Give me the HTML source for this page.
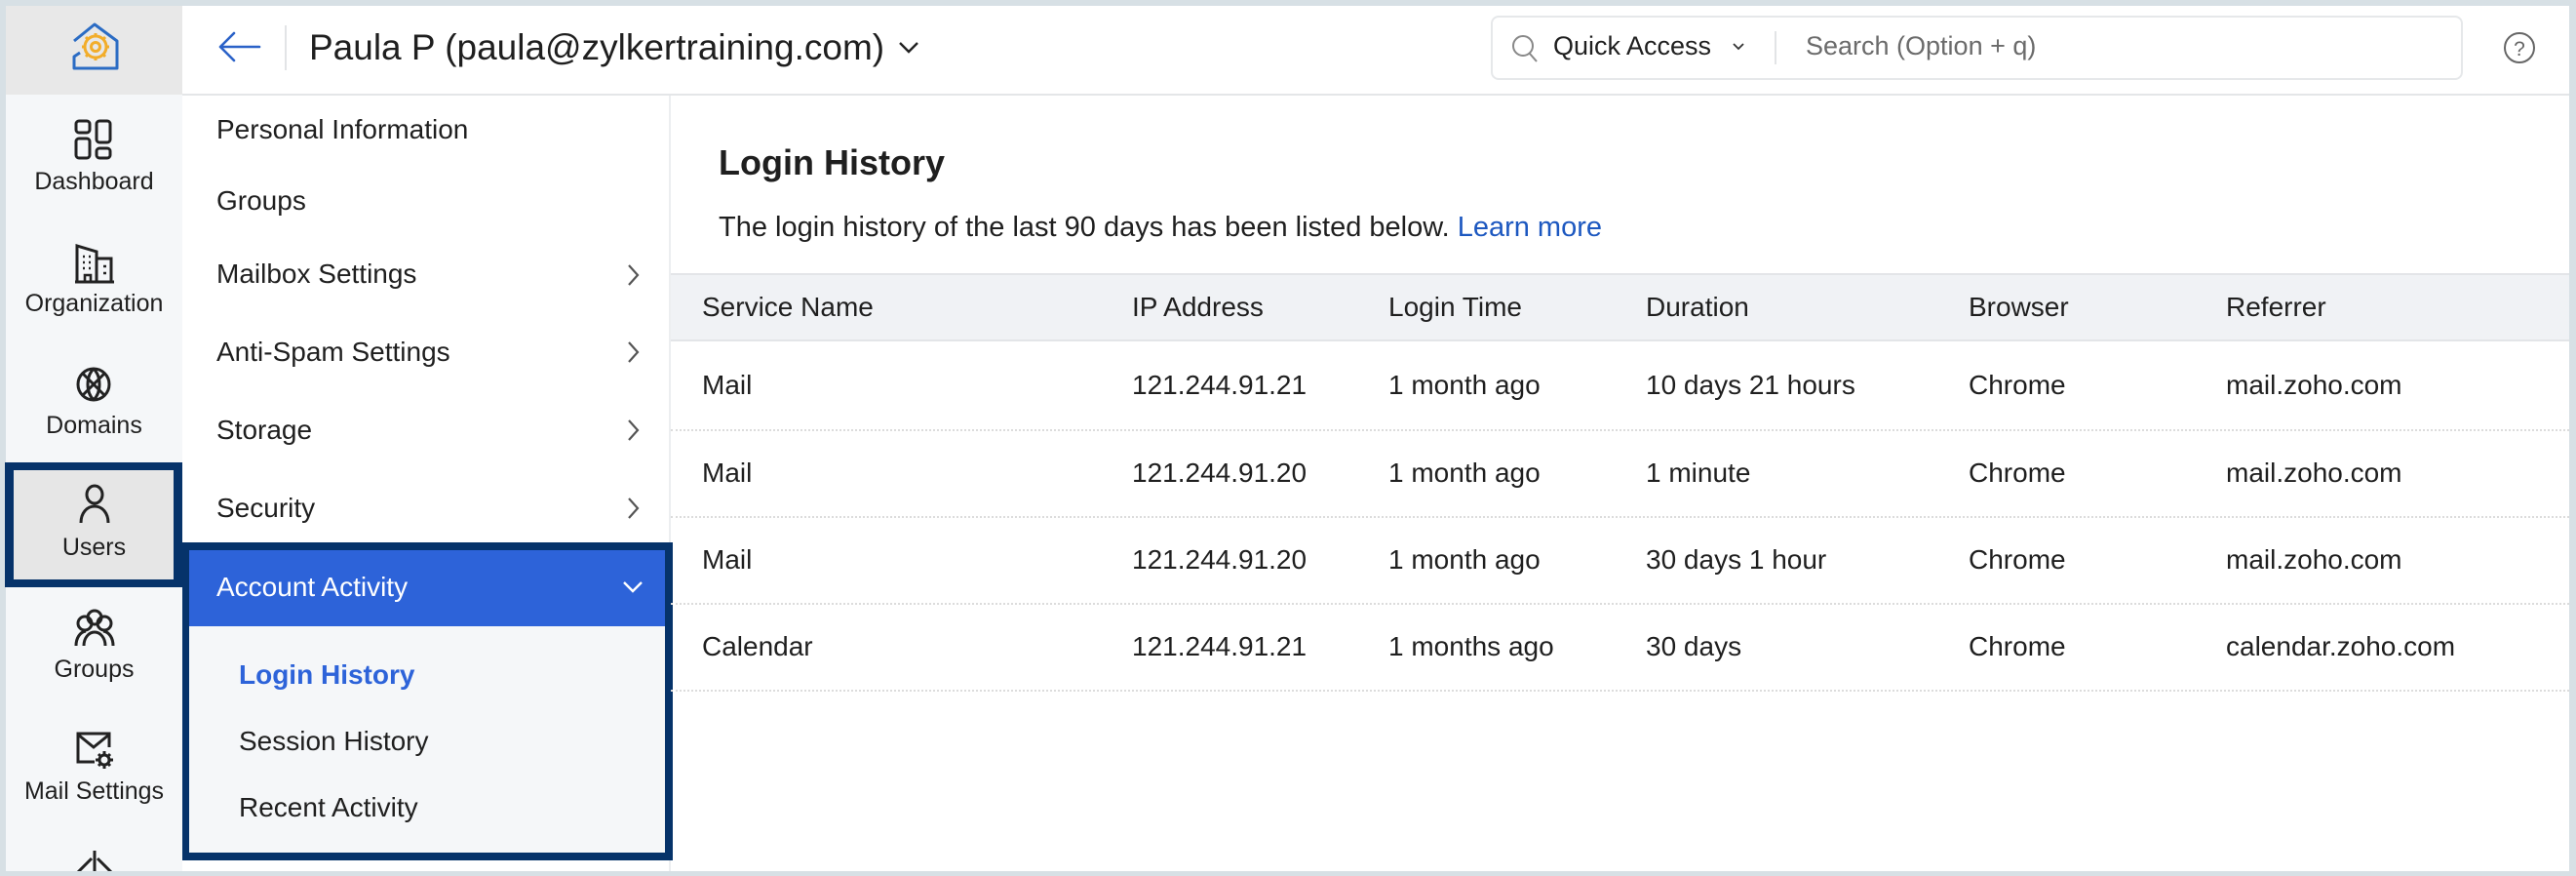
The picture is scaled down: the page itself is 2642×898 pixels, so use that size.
<!DOCTYPE html>
<html><head><meta charset="utf-8"><style>
*{margin:0;padding:0;box-sizing:border-box}
body{width:2642px;height:898px;background:#d7e0e5;font-family:"Liberation Sans",Arial,sans-serif;color:#1f1f1f;position:relative;overflow:hidden}
.a{position:absolute;white-space:nowrap}
.t{line-height:40px;height:40px}
</style></head><body>
<div class="a" style="left:6px;top:6px;width:2629px;height:887px;background:#fff"></div>
<div class="a" style="left:6px;top:6px;width:181px;height:91px;background:#e8e8e8"></div>
<svg class="a" style="left:70px;top:22px" width="56" height="52" viewBox="0 0 56 52">
<path d="M6 20 L27 3 L50 20 V48 H6 V36 L12 32" fill="none" stroke="#2b6cc4" stroke-width="3" stroke-linejoin="round"/>
<g fill="none" stroke="#f2ad2a" stroke-width="3">
<circle cx="28" cy="26" r="11"/><circle cx="28" cy="26" r="4.5"/>
<path d="M28 12v3M28 37v3M14 26h3M39 26h3M18 16l2 2M36 34l2 2M38 16l-2 2M18 36l2-2"/>
</g></svg>
<div class="a" style="left:6px;top:97px;width:181px;height:796px;background:#f5f7f9"></div>
<div class="a" style="left:187px;top:96px;width:2448px;height:2px;background:#e4e6e8"></div>
<svg class="a" style="left:222px;top:30px" width="48" height="36" viewBox="0 0 48 36"><path d="M44 18H4M18 4L4 18L18 32" fill="none" stroke="#2b62c8" stroke-width="2.6" stroke-linecap="round" stroke-linejoin="round"/></svg>
<div class="a" style="left:292px;top:26px;width:2px;height:46px;background:#e2e4e6"></div>
<div class="a" style="left:317px;top:28px;font-size:37px;line-height:42px">Paula P (paula@zylkertraining.com)</div>
<svg class="a" style="left:920px;top:41px" width="24" height="16" viewBox="0 0 24 16"><path d="M3 3l9 9 9-9" fill="none" stroke="#222" stroke-width="2.4"/></svg>
<div class="a" style="left:1529px;top:16px;width:997px;height:66px;border:2px solid #e6e8ea;border-radius:8px"></div>
<svg class="a" style="left:1549px;top:34px" width="30" height="32" viewBox="0 0 30 32"><circle cx="13" cy="13" r="10" fill="none" stroke="#888" stroke-width="2"/><path d="M20 21l7 8" stroke="#888" stroke-width="2"/></svg>
<div class="a" style="left:1593px;top:29px;font-size:27px;line-height:36px">Quick Access</div>
<svg class="a" style="left:1775px;top:42px" width="16" height="12" viewBox="0 0 16 12"><path d="M3 3l5 5 5-5" fill="none" stroke="#333" stroke-width="1.8"/></svg>
<div class="a" style="left:1820px;top:32px;width:2px;height:34px;background:#e2e4e6"></div>
<div class="a" style="left:1852px;top:29px;font-size:27px;line-height:36px;color:#6b6b6b">Search (Option + q)</div>
<svg class="a" style="left:2567px;top:32px" width="34" height="34" viewBox="0 0 34 34"><circle cx="17" cy="17" r="15" fill="none" stroke="#666" stroke-width="2"/><text x="17" y="25" text-anchor="middle" font-family="Liberation Sans" font-size="21" fill="#666">?</text></svg>
<svg class="a" style="left:76px;top:122px" width="40" height="42" viewBox="0 0 40 42" fill="none" stroke="#222" stroke-width="3"><rect x="2" y="2" width="14" height="12" rx="3"/><rect x="23" y="2" width="14" height="22" rx="3"/><rect x="2" y="20" width="14" height="20" rx="3"/><rect x="23" y="30" width="14" height="10" rx="3"/></svg>
<div class="a t" style="left:6px;width:181px;text-align:center;top:166px;font-size:25px">Dashboard</div>
<svg class="a" style="left:76px;top:249px" width="42" height="42" viewBox="0 0 42 42" fill="none" stroke="#222" stroke-width="3"><path d="M3 40V3l20 6v31M23 16h15v24M1 40h40"/><path d="M9 14h2M15 14h2M9 20h2M15 20h2M9 26h2M15 26h2M30 24h3M30 31h3M11 40v-7h6v7" stroke-width="2.6"/></svg>
<div class="a t" style="left:6px;width:181px;text-align:center;top:291px;font-size:25px">Organization</div>
<svg class="a" style="left:77px;top:375px" width="38" height="38" viewBox="0 0 38 38" fill="none" stroke="#222" stroke-width="3"><circle cx="19" cy="19" r="16"/><path d="M8 8l22 22M30 8L8 30M19 3c-8 8-8 24 0 32M19 3c8 8 8 24 0 32"/></svg>
<div class="a t" style="left:6px;width:181px;text-align:center;top:416px;font-size:25px">Domains</div>
<div class="a" style="left:5px;top:474px;width:182px;height:128px;background:#06336a"></div>
<div class="a" style="left:14px;top:482px;width:164px;height:112px;background:#e6e6e6"></div>
<svg class="a" style="left:80px;top:496px" width="34" height="42" viewBox="0 0 34 42" fill="none" stroke="#222" stroke-width="3"><ellipse cx="17" cy="11" rx="8" ry="9"/><path d="M3 40c0-10 6-17 14-17s14 7 14 17"/></svg>
<div class="a t" style="left:6px;width:181px;text-align:center;top:541px;font-size:25px">Users</div>
<svg class="a" style="left:75px;top:624px" width="44" height="40" viewBox="0 0 44 40" fill="none" stroke="#222" stroke-width="3"><circle cx="22" cy="9" r="7"/><circle cx="12" cy="15" r="7"/><circle cx="32" cy="15" r="7"/><path d="M3 38c0-8 4-14 10-15M41 38c0-8-4-14-10-15M11 38c0-8 5-14 11-14s11 6 11 14"/></svg>
<div class="a t" style="left:6px;width:181px;text-align:center;top:666px;font-size:25px">Groups</div>
<svg class="a" style="left:77px;top:749px" width="42" height="40" viewBox="0 0 42 40" fill="none" stroke="#222" stroke-width="3"><path d="M20 32H3V3h32v14"/><path d="M3 4l16 13 16-13"/><circle cx="30" cy="30" r="5"/><path d="M30 21v4M30 35v4M21 30h4M35 30h4M24 24l2.5 2.5M33.5 33.5L36 36M36 24l-2.5 2.5M24 36l2.5-2.5" stroke-width="3"/></svg>
<div class="a t" style="left:6px;width:181px;text-align:center;top:791px;font-size:25px">Mail Settings</div>
<svg class="a" style="left:76px;top:872px" width="42" height="22" viewBox="0 0 42 22" fill="none" stroke="#222" stroke-width="3"><path d="M21 0v22M4 22L18 8M38 22L24 8"/></svg>
<div class="a" style="left:6px;top:893px;width:2630px;height:5px;background:#d7e0e5"></div>
<div class="a" style="left:686px;top:98px;width:2px;height:795px;background:#eceef0"></div>
<div class="a t" style="left:222px;top:113px;font-size:28px">Personal Information</div>
<div class="a t" style="left:222px;top:186px;font-size:28px">Groups</div>
<div class="a t" style="left:222px;top:261px;font-size:28px">Mailbox Settings</div>
<div class="a t" style="left:222px;top:341px;font-size:28px">Anti-Spam Settings</div>
<div class="a t" style="left:222px;top:421px;font-size:28px">Storage</div>
<div class="a t" style="left:222px;top:501px;font-size:28px">Security</div>
<svg class="a" style="left:642px;top:270px" width="14" height="24" viewBox="0 0 14 24"><path d="M3 2l9 10-9 10" fill="none" stroke="#555" stroke-width="2.2"/></svg>
<svg class="a" style="left:642px;top:349px" width="14" height="24" viewBox="0 0 14 24"><path d="M3 2l9 10-9 10" fill="none" stroke="#555" stroke-width="2.2"/></svg>
<svg class="a" style="left:642px;top:429px" width="14" height="24" viewBox="0 0 14 24"><path d="M3 2l9 10-9 10" fill="none" stroke="#555" stroke-width="2.2"/></svg>
<svg class="a" style="left:642px;top:509px" width="14" height="24" viewBox="0 0 14 24"><path d="M3 2l9 10-9 10" fill="none" stroke="#555" stroke-width="2.2"/></svg>
<div class="a" style="left:187px;top:556px;width:503px;height:326px;background:#06336a"></div>
<div class="a" style="left:194px;top:564px;width:488px;height:310px;background:#f5f7f9"></div>
<div class="a" style="left:194px;top:564px;width:488px;height:78px;background:#2d63d9"></div>
<div class="a t" style="left:222px;top:582px;font-size:28px;color:#fff">Account Activity</div>
<svg class="a" style="left:638px;top:594px" width="22" height="16" viewBox="0 0 22 16"><path d="M2 3l9 9 9-9" fill="none" stroke="#fff" stroke-width="2.4"/></svg>
<div class="a t" style="left:245px;top:672px;font-size:28px;color:#2d63d9;font-weight:bold">Login History</div>
<div class="a t" style="left:245px;top:740px;font-size:28px">Session History</div>
<div class="a t" style="left:245px;top:808px;font-size:28px">Recent Activity</div>
<div class="a" style="left:737px;top:145px;font-size:36px;line-height:44px;font-weight:bold">Login History</div>
<div class="a t" style="left:737px;top:213px;font-size:29px">The login history of the last 90 days has been listed below. <span style="color:#1d58c0">Learn more</span></div>
<div class="a" style="left:688px;top:280px;width:1947px;height:70px;background:#f0f2f5;border-top:2px solid #e3e5e8;border-bottom:2px solid #e3e5e8"></div>
<div class="a t" style="left:720px;top:295px;font-size:28px">Service Name</div>
<div class="a t" style="left:1161px;top:295px;font-size:28px">IP Address</div>
<div class="a t" style="left:1424px;top:295px;font-size:28px">Login Time</div>
<div class="a t" style="left:1688px;top:295px;font-size:28px">Duration</div>
<div class="a t" style="left:2019px;top:295px;font-size:28px">Browser</div>
<div class="a t" style="left:2283px;top:295px;font-size:28px">Referrer</div>

<div class="a t" style="left:720px;top:375px;font-size:28px">Mail</div>
<div class="a t" style="left:1161px;top:375px;font-size:28px">121.244.91.21</div>
<div class="a t" style="left:1424px;top:375px;font-size:28px">1 month ago</div>
<div class="a t" style="left:1688px;top:375px;font-size:28px">10 days 21 hours</div>
<div class="a t" style="left:2019px;top:375px;font-size:28px">Chrome</div>
<div class="a t" style="left:2283px;top:375px;font-size:28px">mail.zoho.com</div>
<div class="a" style="left:688px;top:440px;width:1947px;border-top:2px dotted #dcdcdc"></div>

<div class="a t" style="left:720px;top:465px;font-size:28px">Mail</div>
<div class="a t" style="left:1161px;top:465px;font-size:28px">121.244.91.20</div>
<div class="a t" style="left:1424px;top:465px;font-size:28px">1 month ago</div>
<div class="a t" style="left:1688px;top:465px;font-size:28px">1 minute</div>
<div class="a t" style="left:2019px;top:465px;font-size:28px">Chrome</div>
<div class="a t" style="left:2283px;top:465px;font-size:28px">mail.zoho.com</div>
<div class="a" style="left:688px;top:529px;width:1947px;border-top:2px dotted #dcdcdc"></div>

<div class="a t" style="left:720px;top:554px;font-size:28px">Mail</div>
<div class="a t" style="left:1161px;top:554px;font-size:28px">121.244.91.20</div>
<div class="a t" style="left:1424px;top:554px;font-size:28px">1 month ago</div>
<div class="a t" style="left:1688px;top:554px;font-size:28px">30 days 1 hour</div>
<div class="a t" style="left:2019px;top:554px;font-size:28px">Chrome</div>
<div class="a t" style="left:2283px;top:554px;font-size:28px">mail.zoho.com</div>
<div class="a" style="left:688px;top:618px;width:1947px;border-top:2px dotted #dcdcdc"></div>

<div class="a t" style="left:720px;top:643px;font-size:28px">Calendar</div>
<div class="a t" style="left:1161px;top:643px;font-size:28px">121.244.91.21</div>
<div class="a t" style="left:1424px;top:643px;font-size:28px">1 months ago</div>
<div class="a t" style="left:1688px;top:643px;font-size:28px">30 days</div>
<div class="a t" style="left:2019px;top:643px;font-size:28px">Chrome</div>
<div class="a t" style="left:2283px;top:643px;font-size:28px">calendar.zoho.com</div>
<div class="a" style="left:688px;top:707px;width:1947px;border-top:2px dotted #dcdcdc"></div>
</body></html>
